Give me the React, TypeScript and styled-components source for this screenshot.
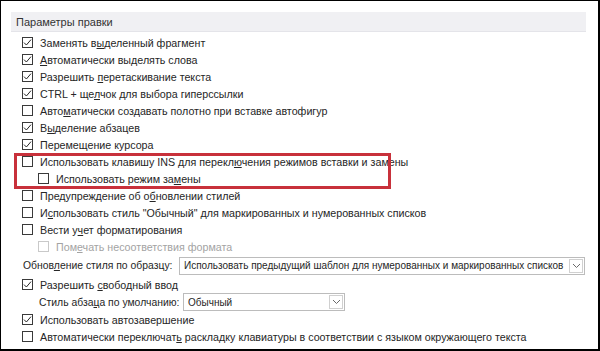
import React from "react";
import styled, { createGlobalStyle } from "styled-components";

const Global = createGlobalStyle`
  html, body { margin: 0; padding: 0; background: #fff; }
  body { font-family: "Liberation Sans", Arial, sans-serif; }
`;

const Frame = styled.div`
  width: 600px;
  height: 351px;
  box-sizing: border-box;
  border-style: solid;
  border-color: #000;
  border-width: 1px 2px 2px 1px;
  padding: 11px 0 0 10px;
  background: #fff;
  display: flex;
  flex-direction: column;
  font-family: "Liberation Sans", Arial, sans-serif;
  font-size: 10.7px;
  color: #262626;
  overflow: hidden;
`;

const SectionHeader = styled.div`
  width: 575px;
  height: 20px;
  box-sizing: border-box;
  background: #f0f0f3;
  border-bottom: 1px solid #e4e4e9;
  padding-left: 5px;
  display: flex;
  align-items: center;
  font-size: 11px;
  color: #333;
`;

const Options = styled.div`
  display: flex;
  flex-direction: column;
  padding-left: 11px;
  margin-top: 2px;
`;

const Row = styled.div<{ $indent?: number }>`
  height: 17px;
  display: flex;
  align-items: center;
  padding-left: ${(p) => p.$indent ?? 0}px;
  white-space: nowrap;
`;

const Box = styled.span<{ $disabled?: boolean }>`
  width: 11px;
  height: 11px;
  box-sizing: border-box;
  border: 1px solid ${(p) => (p.$disabled ? "#c9c9c9" : "#3a3a3a")};
  background: #fff;
  margin-right: 7px;
  flex: none;
  display: flex;
  align-items: center;
  justify-content: center;
`;

const Label = styled.span<{ $disabled?: boolean }>`
  color: ${(p) => (p.$disabled ? "#a3a3a3" : "#262626")};
`;

const Key = styled.span`
  text-decoration: underline;
  text-underline-offset: 1px;
`;

const Highlight = styled.div`
  position: relative;
  &::after {
    content: "";
    position: absolute;
    left: -8px;
    top: 0;
    bottom: -2px;
    width: 377px;
    box-sizing: border-box;
    border: 3px solid #c8313b;
    pointer-events: none;
  }
`;

const FieldRow = styled.div<{ $h: number; $indent: number }>`
  height: ${(p) => p.$h}px;
  display: flex;
  align-items: center;
  padding-left: ${(p) => p.$indent}px;
  white-space: nowrap;
`;

const FieldLabel = styled.span<{ $w: number }>`
  width: ${(p) => p.$w}px;
  flex: none;
  font-size: 10.4px;
`;

const Select = styled.div<{ $w: number }>`
  width: ${(p) => p.$w}px;
  height: 18px;
  box-sizing: border-box;
  border: 1px solid #bcbcbc;
  background: #fff;
  display: flex;
  align-items: stretch;
  flex: none;
`;

const SelectValue = styled.span`
  flex: 1;
  padding-left: 4px;
  display: flex;
  align-items: center;
  overflow: hidden;
  font-size: 10px;
`;

const SelectButton = styled.span`
  width: 14px;
  margin: 1px;
  box-sizing: border-box;
  border: 1px solid #d0d0d0;
  display: flex;
  align-items: center;
  justify-content: center;
`;

function Mnemonic({ text }: { text: string }) {
  const i = text.indexOf("&");
  if (i < 0) return <>{text}</>;
  return (
    <>
      {text.slice(0, i)}
      <Key>{text[i + 1]}</Key>
      {text.slice(i + 2)}
    </>
  );
}

function Check({ checked, disabled }: { checked?: boolean; disabled?: boolean }) {
  return (
    <Box $disabled={disabled}>
      {checked && (
        <svg width="9" height="9" viewBox="0 0 9 9">
          <path d="M1 4.6 L3.4 7 L8 1.6" fill="none" stroke="#262626" strokeWidth="1" />
        </svg>
      )}
    </Box>
  );
}

type Opt = { t: string; c?: boolean; indent?: number; disabled?: boolean };

function Option({ o }: { o: Opt }) {
  return (
    <Row $indent={o.indent}>
      <Check checked={o.c} disabled={o.disabled} />
      <Label $disabled={o.disabled}>
        <Mnemonic text={o.t} />
      </Label>
    </Row>
  );
}

function Chevron() {
  return (
    <svg width="9" height="6" viewBox="0 0 9 6">
      <path d="M1 1 L4.5 4.5 L8 1" fill="none" stroke="#6a6a6a" strokeWidth="1" />
    </svg>
  );
}

const top: Opt[] = [
  { t: "Заменять в&ыделенный фрагмент", c: true },
  { t: "&Автоматически выделять слова", c: true },
  { t: "Разрешить &перетаскивание текста", c: true },
  { t: "CTRL + ще&лчок для выбора гиперссылки", c: true },
  { t: "Авто&матически создавать полотно при вставке автофигур" },
  { t: "В&ыделение абзацев", c: true },
  { t: "Перемещение курсора", c: true },
];

const boxed: Opt[] = [
  { t: "Использовать клавишу INS для перекл&ючения режимов вставки и замены" },
  { t: "Использовать режим за&мены", indent: 16 },
];

const rest: Opt[] = [
  { t: "Предупреждение об о&бновлении стилей" },
  { t: "И&спользовать стиль \"Обычный\" для маркированных и нумерованных списков" },
  { t: "Вести у&чет форматирования" },
  { t: "Пом&ечать несоответствия формата", indent: 16, disabled: true },
];

export default function App() {
  return (
    <>
      <Global />
      <Frame>
        <SectionHeader>Параметры правки</SectionHeader>
        <Options>
          {top.map((o) => (
            <Option key={o.t} o={o} />
          ))}
          <Highlight>
            {boxed.map((o) => (
              <Option key={o.t} o={o} />
            ))}
          </Highlight>
          {rest.map((o) => (
            <Option key={o.t} o={o} />
          ))}
          <FieldRow $h={21} $indent={1}>
            <FieldLabel $w={156}>
              <Mnemonic text="Обнов&ление стиля по образцу:" />
            </FieldLabel>
            <Select $w={406}>
              <SelectValue>Использовать предыдущий шаблон для нумерованных и маркированных списков</SelectValue>
              <SelectButton>
                <Chevron />
              </SelectButton>
            </Select>
          </FieldRow>
          <Option o={{ t: "Разрешить &свободный ввод", c: true }} />
          <FieldRow $h={18} $indent={17}>
            <FieldLabel $w={144}>
              <Mnemonic text="Стиль абза&ца по умолчанию:" />
            </FieldLabel>
            <Select $w={162}>
              <SelectValue>Обычный</SelectValue>
              <SelectButton>
                <Chevron />
              </SelectButton>
            </Select>
          </FieldRow>
          <Option o={{ t: "Использовать автозавершение", c: true }} />
          <Option
            o={{
              t: "Автоматически переключат&ь раскладку клавиатуры в соответствии с языком окружающего текста",
            }}
          />
        </Options>
      </Frame>
    </>
  );
}
